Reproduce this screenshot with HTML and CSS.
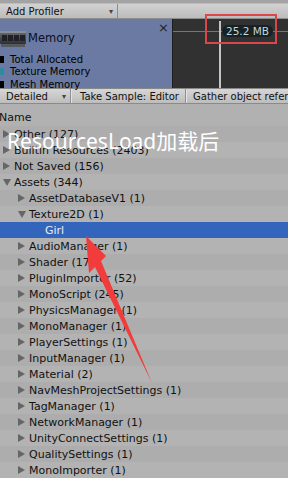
FILE: index.html
```html
<!DOCTYPE html>
<html>
<head>
<meta charset="utf-8">
<link rel="stylesheet" href="styles.css">
</head>
<body>
<div class="app">
  <div class="topstrip"></div>
  <div class="toolbar1">
    <div class="dropdown add">Add Profiler<span class="caret">▾</span></div>
    <div class="fill"></div>
  </div>
  <div class="memory">
    <div class="legend">
      <div class="mtitle">
        <svg class="chip" width="26" height="17" viewBox="0 0 26 17">
          <defs>
            <linearGradient id="cg" x1="0" y1="0" x2="0" y2="1">
              <stop offset="0" stop-color="#6a6e74"/>
              <stop offset="1" stop-color="#2c2f34"/>
            </linearGradient>
          </defs>
          <rect x="0" y="1" width="26" height="13" rx="1" fill="url(#cg)"/>
          <rect x="0" y="1" width="26" height="2" fill="#8a8e94"/>
          <rect x="2" y="5" width="5" height="6" fill="#1f2126"/>
          <rect x="8" y="5" width="5" height="6" fill="#1f2126"/>
          <rect x="14" y="5" width="5" height="6" fill="#1f2126"/>
          <rect x="20" y="5" width="5" height="6" fill="#1f2126"/>
          <rect x="1" y="14" width="24" height="3" fill="#55595f"/>
        </svg>
        <span>Memory</span>
        <span class="close">×</span>
      </div>
      <div class="litem"><span class="sw black"></span>Total Allocated</div>
      <div class="litem"><span class="sw teal"></span>Texture Memory</div>
      <div class="litem"><span class="sw black"></span>Mesh Memory</div>
    </div>
    <div class="graph">
      <div class="hline"></div>
      <div class="vline"></div>
      <div class="pill">25.2 MB</div>
    </div>
  </div>
  <div class="toolbar2">
    <div class="btn detailed">Detailed<span class="caret">▾</span></div>
    <div class="btn sample">Take Sample: Editor</div>
    <div class="btn gather">Gather object references</div>
  </div>
  <div class="header">Name</div>
  <div class="list">
    <div class="row dark l0"><span class="tw"><i class="tri r"></i></span>Other (127)</div>
    <div class="row l0"><span class="tw"><i class="tri r"></i></span>Builtin Resources (2403)</div>
    <div class="row dark l0"><span class="tw"><i class="tri r"></i></span>Not Saved (156)</div>
    <div class="row l0"><span class="tw"><i class="tri d"></i></span>Assets (344)</div>
    <div class="row dark l1"><span class="tw"><i class="tri r"></i></span>AssetDatabaseV1 (1)</div>
    <div class="row l1"><span class="tw"><i class="tri d"></i></span>Texture2D (1)</div>
    <div class="row sel l2">Girl</div>
    <div class="row l1"><span class="tw"><i class="tri r"></i></span>AudioManager (1)</div>
    <div class="row dark l1"><span class="tw"><i class="tri r"></i></span>Shader (17)</div>
    <div class="row l1"><span class="tw"><i class="tri r"></i></span>PluginImporter (52)</div>
    <div class="row dark l1"><span class="tw"><i class="tri r"></i></span>MonoScript (245)</div>
    <div class="row l1"><span class="tw"><i class="tri r"></i></span>PhysicsManager (1)</div>
    <div class="row dark l1"><span class="tw"><i class="tri r"></i></span>MonoManager (1)</div>
    <div class="row l1"><span class="tw"><i class="tri r"></i></span>PlayerSettings (1)</div>
    <div class="row dark l1"><span class="tw"><i class="tri r"></i></span>InputManager (1)</div>
    <div class="row l1"><span class="tw"><i class="tri r"></i></span>Material (2)</div>
    <div class="row dark l1"><span class="tw"><i class="tri r"></i></span>NavMeshProjectSettings (1)</div>
    <div class="row l1"><span class="tw"><i class="tri r"></i></span>TagManager (1)</div>
    <div class="row dark l1"><span class="tw"><i class="tri r"></i></span>NetworkManager (1)</div>
    <div class="row l1"><span class="tw"><i class="tri r"></i></span>UnityConnectSettings (1)</div>
    <div class="row dark l1"><span class="tw"><i class="tri r"></i></span>QualitySettings (1)</div>
    <div class="row l1"><span class="tw"><i class="tri r"></i></span>MonoImporter (1)</div>
  </div>

  <div class="redbox"></div>
  <div class="caption">ResourcesLoad加载后</div>
  <svg class="arrow" width="288" height="478" viewBox="0 0 288 478">
    <polygon points="86,236 106,256 101,261 152,383 95,267 89,273" fill="#f23b3b"/>
  </svg>
</div>
</body>
</html>
```
FILE: styles.css
```css
html, body {
  margin: 0;
  padding: 0;
}
body {
  width: 288px;
  height: 478px;
  overflow: hidden;
  background: #b0b0b0;
  font-family: "DejaVu Sans", Verdana, sans-serif;
  color: #111;
}
.app {
  position: relative;
  width: 288px;
  height: 478px;
  overflow: hidden;
}
.topstrip {
  height: 4px;
  background: #a3a3a3;
  border-bottom: 1px solid #bdbdbd;
  box-sizing: border-box;
}
.toolbar1 {
  height: 15px;
  display: flex;
  background: linear-gradient(#d2d2d2, #bcbcbc);
  border-bottom: 1px solid #8c8c8c;
  box-sizing: border-box;
}
.dropdown {
  width: 118px;
  display: flex;
  align-items: center;
  padding-left: 6px;
  box-sizing: border-box;
  font-size: 10px;
  position: relative;
  border-right: 1px solid #8e8e8e;
}
.caret {
  position: absolute;
  right: 4px;
  font-size: 8px;
  color: #444;
}
.fill { flex: 1; }
.memory {
  height: 69px;
  display: flex;
}
.legend {
  width: 172px;
  background: #6b7aa2;
  position: relative;
}
.mtitle {
  height: 34px;
  display: flex;
  align-items: center;
  padding-top: 4px;
  box-sizing: border-box;
  font-size: 11.5px;
  color: #0c1020;
}
.chip { margin-right: 2px; }
.close {
  position: absolute;
  right: 3px;
  top: 1px;
  font-size: 13px;
  color: #222;
}
.litem {
  height: 12.5px;
  display: flex;
  align-items: center;
  font-size: 10px;
  color: #000;
  white-space: nowrap;
}
.sw {
  width: 4px;
  height: 7px;
  margin-right: 6px;
}
.sw.black { background: #000; }
.sw.teal { background: #2f8aa0; }
.graph {
  flex: 1;
  background: #313131;
  position: relative;
  border-left: 1px solid #1e1e1e;
}
.hline {
  position: absolute;
  left: 0;
  right: 0;
  top: 12px;
  height: 1px;
  background: #3b8aa0;
}
.vline {
  position: absolute;
  left: 46px;
  top: 2px;
  bottom: 0;
  width: 2px;
  background: #c4c4c4;
}
.pill {
  position: absolute;
  left: 49px;
  top: 6px;
  height: 12px;
  line-height: 12px;
  padding: 0 4px;
  border-radius: 6px;
  background: #152226;
  color: #c9d4d8;
  font-size: 10.5px;
}
.toolbar2 {
  height: 16px;
  display: flex;
  background: linear-gradient(#d6d6d6, #bdbdbd);
  border-top: 1px solid #888;
  border-bottom: 1px solid #8a8a8a;
  box-sizing: border-box;
}
.btn {
  display: flex;
  align-items: center;
  font-size: 10px;
  white-space: nowrap;
  overflow: hidden;
  border-right: 1px solid #8e8e8e;
  box-sizing: border-box;
  position: relative;
}
.detailed { width: 71px; padding-left: 6px; }
.sample { width: 115px; padding-left: 8px; border-left: 1px solid #e4e4e4; }
.gather { flex: 1; padding-left: 6px; border-right: none; border-left: 1px solid #e4e4e4; }
.header {
  height: 22px;
  padding-top: 7px;
  box-sizing: border-box;
  font-size: 11px;
  padding-left: 0;
  margin-left: -1px;
  background: #b1b1b1;
}
.row {
  height: 16px;
  display: flex;
  align-items: center;
  font-size: 11px;
  white-space: nowrap;
  background: #b3b3b3;
}
.row.dark { background: #adadad; }
.row.sel { background: #3465bd; color: #e6ecf6; }
.l0 { padding-left: 3px; }
.l1 { padding-left: 18px; }
.l2 { padding-left: 45px; }
.tw {
  width: 11px;
  display: flex;
  align-items: center;
}
.tri {
  display: block;
  width: 0;
  height: 0;
}
.tri.r {
  border-left: 7px solid #666;
  border-top: 4px solid transparent;
  border-bottom: 4px solid transparent;
}
.tri.d {
  border-top: 7px solid #666;
  border-left: 4px solid transparent;
  border-right: 4px solid transparent;
}
.redbox {
  position: absolute;
  left: 205px;
  top: 14px;
  width: 72px;
  height: 30px;
  border: 2px solid #d9474a;
  box-sizing: border-box;
}
.caption {
  position: absolute;
  left: 7px;
  top: 127px;
  font-family: "Noto Sans", "Noto Sans CJK SC", sans-serif;
  font-size: 21px;
  color: #fff;
  line-height: 28px;
  white-space: nowrap;
}
.arrow {
  position: absolute;
  left: 0;
  top: 0;
}
```
